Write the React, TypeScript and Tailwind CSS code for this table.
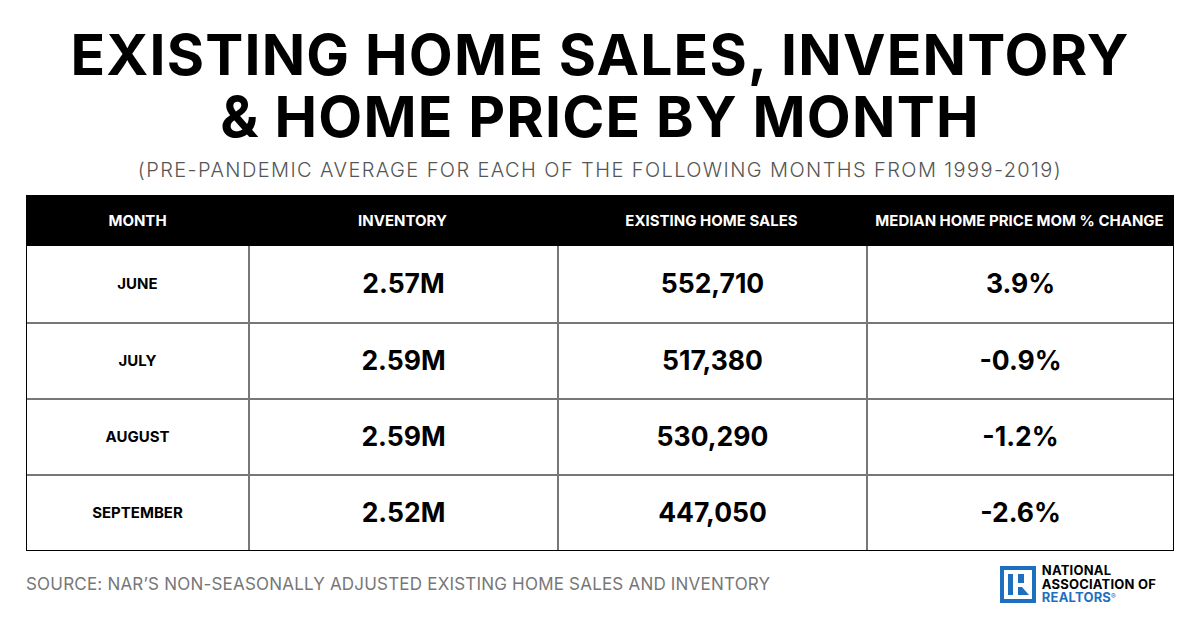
import React from "react";

const rows = [
  ["JUNE", "2.57M", "552,710", "3.9%"],
  ["JULY", "2.59M", "517,380", "-0.9%"],
  ["AUGUST", "2.59M", "530,290", "-1.2%"],
  ["SEPTEMBER", "2.52M", "447,050", "-2.6%"],
];

function NarLogo() {
  return (
    <svg width="36" height="37" viewBox="0 0 36 37">
      <rect x="0" y="0" width="36" height="37" fill="#1f6fc0" />
      <rect x="4" y="4" width="28" height="29" fill="#fff" />
      <rect x="8" y="8" width="5" height="21" fill="#1f6fc0" />
      <rect x="18" y="8" width="6" height="9" fill="#1f6fc0" />
      <polygon points="18,21 22,21 29,29 18,29" fill="#1f6fc0" />
    </svg>
  );
}

export default function App() {
  const font = { fontFamily: "Inter, 'Liberation Sans', sans-serif" };
  return (
    <div className="w-[1200px] h-[630px] bg-white flex flex-col items-center text-black overflow-hidden" style={font}>
      <h1 className="pt-[24px] text-[57px] leading-[62px] font-bold text-center tracking-[1.2px]">
        EXISTING HOME SALES, INVENTORY
        <br />& HOME PRICE BY MONTH
      </h1>
      <div className="mt-[10px] text-[20px] leading-[24px] text-[#555] font-light tracking-[1.4px]">
        (PRE-PANDEMIC AVERAGE FOR EACH OF THE FOLLOWING MONTHS FROM 1999-2019)
      </div>
      <div className="mt-[13px] w-[1148px] border border-black">
        <div className="grid grid-cols-[221px_309px_309px_1fr] bg-black text-white h-[50px] items-center text-[15px] font-bold">
          <div className="text-center">MONTH</div>
          <div className="text-center">INVENTORY</div>
          <div className="text-center">EXISTING HOME SALES</div>
          <div className="text-center">MEDIAN HOME PRICE MOM % CHANGE</div>
        </div>
        {rows.map((r, i) => (
          <div
            key={r[0]}
            className={`grid grid-cols-[221px_309px_309px_1fr] h-[76px] ${i > 0 ? "border-t-2 border-[#777]" : ""}`}
          >
            <div className="flex items-center justify-center text-[15px] font-bold">{r[0]}</div>
            <div className="flex items-center justify-center text-[26.5px] font-bold border-l-2 border-[#777]">{r[1]}</div>
            <div className="flex items-center justify-center text-[26.5px] font-bold border-l-2 border-[#777]">{r[2]}</div>
            <div className="flex items-center justify-center text-[26.5px] font-bold border-l-2 border-[#777]">{r[3]}</div>
          </div>
        ))}
      </div>
      <div className="w-[1148px] flex items-center justify-between mt-[13px]">
        <div className="text-[17px] text-[#777] tracking-[0.2px]">
          SOURCE: NAR’S NON-SEASONALLY ADJUSTED EXISTING HOME SALES AND INVENTORY
        </div>
        <div className="flex items-center gap-[6px] mr-[18px]">
          <NarLogo />
          <div className="text-[13px] leading-[13.5px] font-bold tracking-[0.2px]">
            <div>NATIONAL</div>
            <div>ASSOCIATION OF</div>
            <div className="text-[#1f6fc0]">
              REALTORS<sup className="text-[7px]">®</sup>
            </div>
          </div>
        </div>
      </div>
    </div>
  );
}
